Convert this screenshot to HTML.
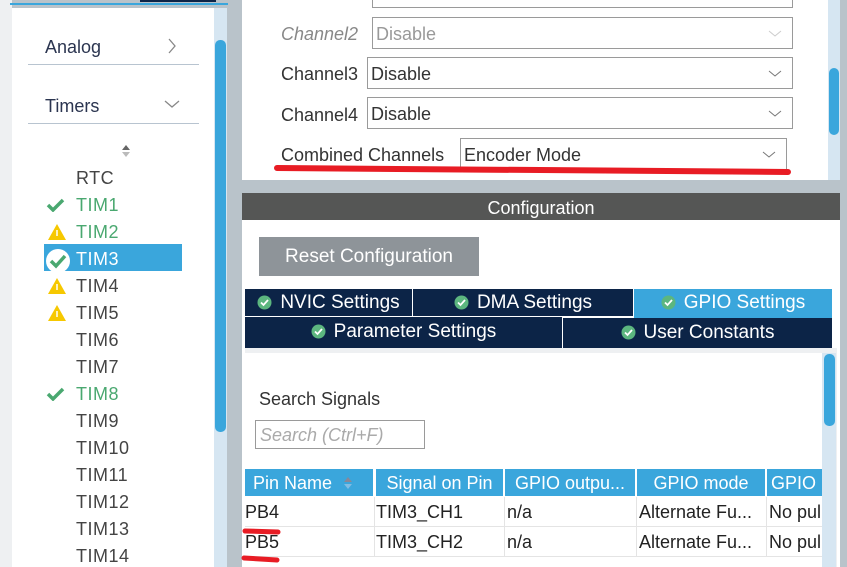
<!DOCTYPE html>
<html><head><meta charset="utf-8"><style>
*{margin:0;padding:0;box-sizing:border-box}
body{width:847px;height:567px;overflow:hidden;background:#b9c3ca;font-family:"Liberation Sans",sans-serif;position:relative;color:#333}
.a{position:absolute}
.t{position:absolute;white-space:nowrap;font-size:18px;line-height:20px}
.dd{position:absolute;border:1px solid #9a9a9a;background:#fff;height:32px}
.dd span{position:absolute;left:3px;top:6px;font-size:18px;color:#333}
.dd svg{position:absolute;right:10px;top:12px}
.tab{position:absolute;background:#0c2447;color:#fff;font-size:19px;text-align:center;line-height:27px;white-space:nowrap}
.ck{display:inline-block;vertical-align:-2px;margin-right:8px}
.th{position:absolute;top:469px;height:27px;background:#3aa6dc;color:#fff;font-size:18px;line-height:29px;text-align:center;white-space:nowrap;overflow:hidden}
.td{position:absolute;font-size:18px;white-space:nowrap;overflow:hidden;color:#222}
</style></head><body>
<div class="a" style="left:0;top:0;width:12px;height:567px;background:#eef0f2"></div>
<div class="a" style="left:12px;top:8px;width:202px;height:559px;background:#fff"></div>
<div class="a" style="left:10px;top:3px;width:218px;height:2px;background:#3aa6dc"></div>
<div class="a" style="left:140px;top:0;width:76px;height:2px;background:#0c2447"></div>
<div class="a" style="left:214px;top:8px;width:13px;height:559px;background:#d6e6f2"></div>
<div class="a" style="left:215px;top:40px;width:11px;height:392px;background:#3aa6dc;border-radius:5px"></div>
<div class="t" style="left:45px;top:37px;color:#2b3550">Analog</div>
<svg class="a" style="left:167px;top:38px" width="10" height="16"><path d="M2 1l6 7-6 7" stroke="#888" fill="none" stroke-width="1.3"/></svg>
<div class="a" style="left:28px;top:64px;width:171px;height:1px;background:#b8c4d0"></div>
<div class="t" style="left:45px;top:96px;color:#2b3550">Timers</div>
<svg class="a" style="left:164px;top:99px" width="16" height="10"><path d="M1 2l7 6 7-6" stroke="#888" fill="none" stroke-width="1.3"/></svg>
<div class="a" style="left:28px;top:123px;width:171px;height:1px;background:#b8c4d0"></div>
<svg class="a" style="left:121px;top:144px" width="10" height="14"><path d="M5 1l4 5H1z" fill="#666"/><path d="M5 13l4-5H1z" fill="#bbb"/></svg>
<div class="a" style="left:44px;top:244px;width:138px;height:27px;background:#3aa6dc"></div>
<div id="list"></div>
<div class="a" style="left:242px;top:0;width:586px;height:180px;background:#fff"></div>
<div class="a" style="left:828px;top:0;width:12px;height:180px;background:#d6e6f2"></div>
<div class="a" style="left:829px;top:68px;width:10px;height:67px;background:#3aa6dc;border-radius:5px"></div>
<div class="a" style="left:372px;top:0;width:421px;height:8px;border:1px solid #9a9a9a;border-top:none"></div>
<div class="t" style="left:281px;top:24px;color:#888;font-style:italic">Channel2</div>
<div class="dd" style="left:372px;top:17px;width:421px"><span style="color:#999">Disable</span><svg width="14" height="8"><path d="M1 1l6 5 6-5" stroke="#ccc" fill="none"/></svg></div>
<div class="t" style="left:281px;top:64px">Channel3</div>
<div class="dd" style="left:367px;top:57px;width:426px"><span>Disable</span><svg width="14" height="8"><path d="M1 1l6 5 6-5" stroke="#777" fill="none"/></svg></div>
<div class="t" style="left:281px;top:105px">Channel4</div>
<div class="dd" style="left:367px;top:97px;width:426px"><span>Disable</span><svg width="14" height="8"><path d="M1 1l6 5 6-5" stroke="#777" fill="none"/></svg></div>
<div class="t" style="left:281px;top:145px">Combined Channels</div>
<div class="dd" style="left:460px;top:138px;width:327px"><span>Encoder Mode</span><svg width="14" height="8"><path d="M1 1l6 5 6-5" stroke="#777" fill="none"/></svg></div>
<svg class="a" style="left:270px;top:163px" width="525" height="14"><path d="M7 5L518 9" stroke="#e81c24" stroke-width="6" stroke-linecap="round"/></svg>
<div class="a" style="left:242px;top:193px;width:598px;height:27px;background:#555655;color:#fff;font-size:18px;text-align:center;line-height:30px">Configuration</div>
<div class="a" style="left:242px;top:220px;width:598px;height:347px;background:#fff"></div>
<div class="a" style="left:259px;top:237px;width:220px;height:39px;background:#8e9499;color:#fff;font-size:19px;text-align:center;line-height:40px">Reset Configuration</div>
<div class="tab" style="left:245px;top:289px;width:167px">§NVIC Settings</div>
<div class="tab" style="left:413px;top:289px;width:220px">§DMA Settings</div>
<div class="tab" style="left:634px;top:289px;width:198px;height:29px;background:#3aa6dc">§GPIO Settings</div>
<div class="tab" style="left:245px;top:317px;width:317px;height:31px;line-height:30px">§Parameter Settings</div>
<div class="tab" style="left:563px;top:318px;width:269px;height:30px;line-height:29px">§User Constants</div>
<div class="a" style="left:245px;top:348px;width:592px;height:219px;background:#eef0f2"></div>
<div class="a" style="left:245px;top:353px;width:577px;height:214px;background:#fff"></div>
<div class="a" style="left:822px;top:353px;width:14px;height:214px;background:#d6e6f2"></div>
<div class="a" style="left:824px;top:354px;width:11px;height:72px;background:#3aa6dc;border-radius:5px"></div>
<div class="t" style="left:259px;top:389px">Search Signals</div>
<div class="a" style="left:255px;top:420px;width:170px;height:29px;border:1px solid #9a9a9a;font-size:18px;color:#aaa;font-style:italic;padding:4px 4px">Search (Ctrl+F)</div>
<div class="th" style="left:245px;width:128px;text-align:left;padding-left:8px">Pin Name <svg width="10" height="14" style="margin-left:6px;vertical-align:-1px"><path d="M5 1l4 5H1z" fill="#889"/><path d="M5 13l4-5H1z" fill="#7fbde4"/></svg></div>
<div class="th" style="left:376px;width:127px">Signal on Pin</div>
<div class="th" style="left:505px;width:130px">GPIO outpu...</div>
<div class="th" style="left:637px;width:128px">GPIO mode</div>
<div class="th" style="left:767px;width:55px;text-align:left;padding-left:4px">GPIO</div>
<div class="a" style="left:245px;top:526px;width:577px;height:1px;background:#e4e4e4"></div>
<div class="a" style="left:245px;top:556px;width:577px;height:1px;background:#e4e4e4"></div>
<div class="a" style="left:374px;top:497px;width:1px;height:60px;background:#e4e4e4"></div>
<div class="a" style="left:504px;top:497px;width:1px;height:60px;background:#e4e4e4"></div>
<div class="a" style="left:636px;top:497px;width:1px;height:60px;background:#e4e4e4"></div>
<div class="a" style="left:766px;top:497px;width:1px;height:60px;background:#e4e4e4"></div>
<div class="td" style="left:245px;top:502px">PB4</div>
<div class="td" style="left:376px;top:502px">TIM3_CH1</div>
<div class="td" style="left:507px;top:502px">n/a</div>
<div class="td" style="left:639px;top:502px">Alternate Fu...</div>
<div class="td" style="left:769px;top:502px;width:53px">No pull</div>
<div class="td" style="left:245px;top:532px">PB5</div>
<div class="td" style="left:376px;top:532px">TIM3_CH2</div>
<div class="td" style="left:507px;top:532px">n/a</div>
<div class="td" style="left:639px;top:532px">Alternate Fu...</div>
<div class="td" style="left:769px;top:532px;width:53px">No pull</div>
<svg class="a" style="left:240px;top:526px" width="50" height="40"><path d="M5 5L38 6" stroke="#e81c24" stroke-width="5" stroke-linecap="round"/><path d="M4 32L37 34" stroke="#e81c24" stroke-width="5" stroke-linecap="round"/></svg>
<script>
var ck='<svg class="ck" width="15" height="15"><circle cx="7.5" cy="7.5" r="7" fill="#5cb67f"/><path d="M4 7.5l2.5 2.5 4.5-5" stroke="#fff" stroke-width="1.8" fill="none"/></svg>';
document.querySelectorAll('.tab').forEach(function(e){e.innerHTML=e.innerHTML.replace('§',ck)});
var items=[["RTC",""],["TIM1","c"],["TIM2","w"],["TIM3","s"],["TIM4","x"],["TIM5","x"],["TIM6",""],["TIM7",""],["TIM8","c"],["TIM9",""],["TIM10",""],["TIM11",""],["TIM12",""],["TIM13",""],["TIM14",""]];
var h='';
items.forEach(function(it,i){var y=168+i*27;var col=it[1]=="c"||it[1]=="w"?"#4aa870":(it[1]=="s"?"#fff":"#444");
h+='<div class="t" style="left:76px;top:'+y+'px;color:'+col+';letter-spacing:0.5px">'+it[0]+'</div>';
if(it[1]=="c")h+='<svg class="a" style="left:46px;top:'+(y+3)+'px" width="20" height="14"><path d="M2 7l5 5 10-10" stroke="#4aa870" stroke-width="3.5" fill="none"/></svg>';
if(it[1]=="w"||it[1]=="x")h+='<svg class="a" style="left:47px;top:'+(y+1)+'px" width="20" height="18"><path d="M10 1L19 17H1z" fill="#f6c800"/><path d="M10 7v6" stroke="#fff" stroke-width="1.5"/></svg>';
if(it[1]=="s")h+='<svg class="a" style="left:45px;top:'+(y-1)+'px" width="26" height="26"><circle cx="13" cy="13" r="12" fill="#fff"/><path d="M6 13l5 5 9-10" stroke="#4aa870" stroke-width="3.5" fill="none"/></svg>';
});
document.getElementById('list').innerHTML=h;
</script>
</body></html>
